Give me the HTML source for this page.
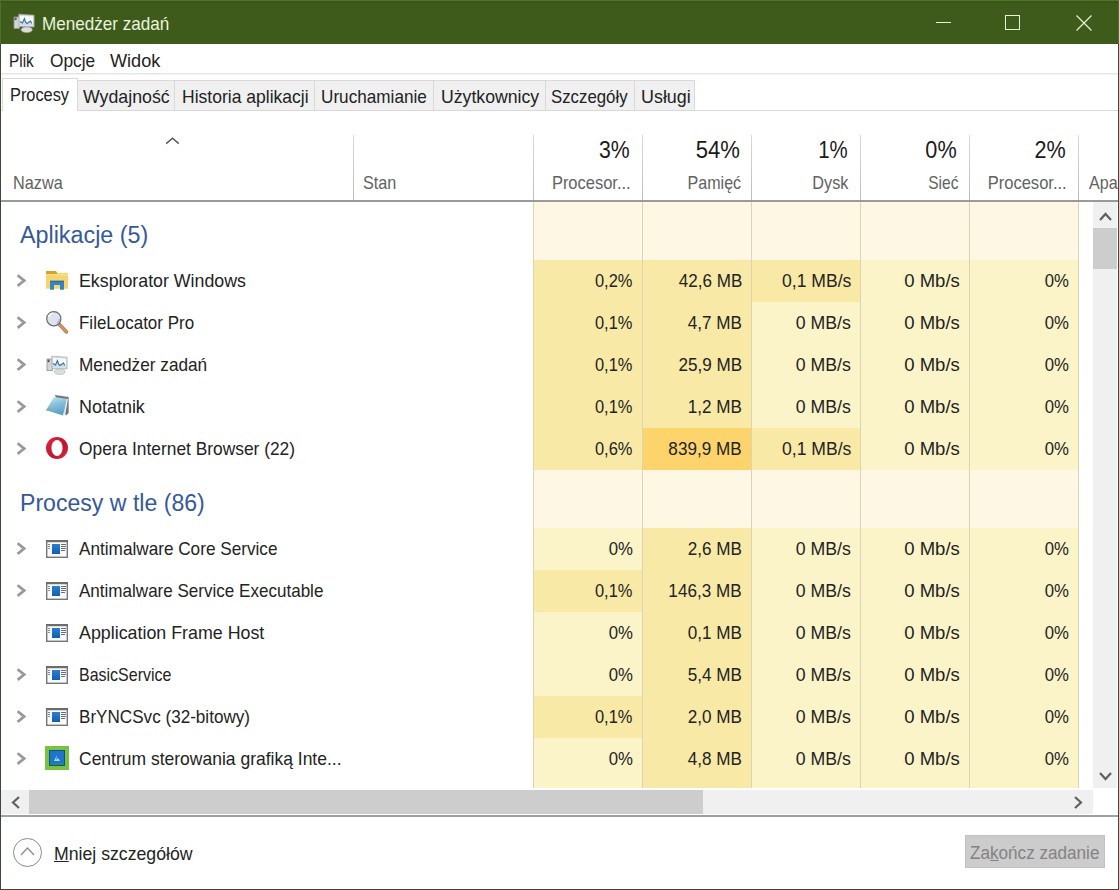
<!DOCTYPE html>
<html><head><meta charset="utf-8"><style>
html,body{margin:0;padding:0;width:1119px;height:890px;overflow:hidden;background:#fff}
body{position:relative;font-family:"Liberation Sans", sans-serif}
.t{position:absolute;white-space:nowrap;font-family:"Liberation Sans", sans-serif}
.r{position:absolute;display:block}
u{text-decoration:underline;text-underline-offset:1px}
</style></head><body>
<div class="r" style="left:0px;top:0px;width:1119px;height:44px;background:#3e5b1c;"></div>
<div class="r" style="left:0px;top:0px;width:1119px;height:1px;background:#536f2f;"></div>
<div class="r" style="left:0px;top:1px;width:1119px;height:2px;background:#385614;"></div>
<svg class="r" style="left:13px;top:12px;" width="23" height="22" viewBox="0 0 23 22">
      <rect x="1" y="5" width="5.5" height="11.5" fill="#d3d5d7" stroke="#8d9193" stroke-width="0.8"/>
      <rect x="1.6" y="5.6" width="2" height="2.6" fill="#5a5a5a"/>
      <path d="M5.8,2.2 L21.1,3.2 L21.1,14.9 L5.8,14.5 Z" fill="#d6d8da" stroke="#a9adb0" stroke-width="0.7"/>
      <path d="M7,3.8 L20,4.6 L20,13.6 L7,13.3 Z" fill="#f6f9fb"/>
      <path d="M7,9.5 L9.5,11 L11.4,6.5 L12.5,10 L14,11.5 L17.5,9 L18.8,11.5 L20,12 L20,13.6 L7,13.3 Z" fill="#c9dcf2"/>
      <polyline points="7,9.5 9.5,11 11.4,6.5 12.5,10 14,11.5 17.5,9 18.8,11.5" fill="none" stroke="#3a6f8c" stroke-width="1.1"/>
      <ellipse cx="13.7" cy="17.8" rx="5.6" ry="2.8" fill="#dcdcdc" stroke="#aeb0b2" stroke-width="0.6"/>
    </svg>
<div class="t" style="left:42.30px;top:13px;font-size:18.6px;line-height:21px;color:#e8f4dc;transform-origin:0 0;transform:scaleX(0.9187);">Menedżer zadań</div>
<div class="r" style="left:936px;top:22px;width:15px;height:1px;background:#e6f3d6;"></div>
<div class="r" style="left:1005px;top:15px;width:13px;height:13px;border:1px solid #e6f3d6"></div>
<svg class="r" style="left:1076px;top:15px;" width="16" height="16" viewBox="0 0 16 16"><path d="M0.5,0.5 L15.5,15.5 M15.5,0.5 L0.5,15.5" stroke="#e6f3d6" stroke-width="1.2"/></svg>
<div class="r" style="left:0px;top:44px;width:1119px;height:846px;background:#ffffff;"></div>
<div class="t" style="left:9.20px;top:51px;font-size:18.17px;line-height:20px;color:#232323;transform-origin:0 0;transform:scaleX(0.8467);">Plik</div>
<div class="t" style="left:49.90px;top:51px;font-size:18.17px;line-height:20px;color:#232323;transform-origin:0 0;transform:scaleX(0.9511);">Opcje</div>
<div class="t" style="left:109.90px;top:51px;font-size:18.17px;line-height:20px;color:#232323;transform-origin:0 0;">Widok</div>
<div class="r" style="left:1px;top:73px;width:1117px;height:1px;background:#e6e6e6;"></div>
<div class="r" style="left:1px;top:74px;width:1117px;height:1px;background:#f2f2f2;"></div>
<div class="r" style="left:1px;top:110px;width:1117px;height:1px;background:#d9d9d9;"></div>
<div class="r" style="left:77px;top:80px;width:98px;height:31px;background:#f0f0f0;border:1px solid #d9d9d9;box-sizing:border-box"></div>
<div class="t" style="left:82.60px;top:87px;font-size:18.17px;line-height:20px;color:#232323;transform-origin:0 0;transform:scaleX(0.9775);">Wydajność</div>
<div class="r" style="left:174px;top:80px;width:141px;height:31px;background:#f0f0f0;border:1px solid #d9d9d9;box-sizing:border-box"></div>
<div class="t" style="left:182.20px;top:87px;font-size:18.17px;line-height:20px;color:#232323;transform-origin:0 0;transform:scaleX(0.9649);">Historia aplikacji</div>
<div class="r" style="left:314px;top:80px;width:120px;height:31px;background:#f0f0f0;border:1px solid #d9d9d9;box-sizing:border-box"></div>
<div class="t" style="left:321.40px;top:87px;font-size:18.17px;line-height:20px;color:#232323;transform-origin:0 0;transform:scaleX(0.9446);">Uruchamianie</div>
<div class="r" style="left:433px;top:80px;width:113px;height:31px;background:#f0f0f0;border:1px solid #d9d9d9;box-sizing:border-box"></div>
<div class="t" style="left:440.50px;top:87px;font-size:18.17px;line-height:20px;color:#232323;transform-origin:0 0;transform:scaleX(0.9733);">Użytkownicy</div>
<div class="r" style="left:545px;top:80px;width:90px;height:31px;background:#f0f0f0;border:1px solid #d9d9d9;box-sizing:border-box"></div>
<div class="t" style="left:551.30px;top:87px;font-size:18.17px;line-height:20px;color:#232323;transform-origin:0 0;transform:scaleX(0.9253);">Szczegóły</div>
<div class="r" style="left:634px;top:80px;width:61px;height:31px;background:#f0f0f0;border:1px solid #d9d9d9;box-sizing:border-box"></div>
<div class="t" style="left:640.70px;top:87px;font-size:18.17px;line-height:20px;color:#232323;transform-origin:0 0;transform:scaleX(0.9860);">Usługi</div>
<div class="r" style="left:2px;top:78px;width:76px;height:33px;background:#fff;border:1px solid #d9d9d9;border-bottom:none;box-sizing:border-box"></div>
<div class="t" style="left:10.00px;top:85px;font-size:17.59px;line-height:20px;color:#232323;transform-origin:0 0;transform:scaleX(0.9297);">Procesy</div>
<div class="r" style="left:353px;top:135px;width:1px;height:65px;background:linear-gradient(#dadada,#bcbcbc);"></div>
<div class="r" style="left:533px;top:135px;width:1px;height:65px;background:linear-gradient(#dadada,#bcbcbc);"></div>
<div class="r" style="left:642px;top:135px;width:1px;height:65px;background:linear-gradient(#dadada,#bcbcbc);"></div>
<div class="r" style="left:751px;top:135px;width:1px;height:65px;background:linear-gradient(#dadada,#bcbcbc);"></div>
<div class="r" style="left:860px;top:135px;width:1px;height:65px;background:linear-gradient(#dadada,#bcbcbc);"></div>
<div class="r" style="left:969px;top:135px;width:1px;height:65px;background:linear-gradient(#dadada,#bcbcbc);"></div>
<div class="r" style="left:1078px;top:135px;width:1px;height:65px;background:linear-gradient(#dadada,#bcbcbc);"></div>
<div class="r" style="left:1px;top:200px;width:1117px;height:2px;background:#9a9a9a;"></div>
<svg class="r" style="left:165px;top:136px;" width="15" height="9" viewBox="0 0 15 9"><polyline points="1.2,7.6 7.5,2.2 13.8,7.6" fill="none" stroke="#555" stroke-width="1.4"/></svg>
<div class="t" style="left:12.90px;top:173px;font-size:17.73px;line-height:20px;color:#616363;transform-origin:0 0;transform:scaleX(0.9182);">Nazwa</div>
<div class="t" style="left:363.40px;top:173px;font-size:17.73px;line-height:20px;color:#616363;transform-origin:0 0;transform:scaleX(0.9139);">Stan</div>
<div class="t" style="right:488.92px;top:136px;font-size:23.98px;line-height:27px;color:#1a1a1a;text-align:right;transform-origin:100% 0;transform:scaleX(0.8857);">3%</div>
<div class="t" style="right:488.28px;top:173px;font-size:17.73px;line-height:20px;color:#616363;text-align:right;transform-origin:100% 0;transform:scaleX(0.9306);">Procesor...</div>
<div class="t" style="right:379.33px;top:136px;font-size:23.98px;line-height:27px;color:#1a1a1a;text-align:right;transform-origin:100% 0;transform:scaleX(0.9208);">54%</div>
<div class="t" style="right:377.82px;top:173px;font-size:17.73px;line-height:20px;color:#616363;text-align:right;transform-origin:100% 0;transform:scaleX(0.9051);">Pamięć</div>
<div class="t" style="right:271.11px;top:136px;font-size:23.98px;line-height:27px;color:#1a1a1a;text-align:right;transform-origin:100% 0;transform:scaleX(0.8514);">1%</div>
<div class="t" style="right:270.79px;top:173px;font-size:17.73px;line-height:20px;color:#616363;text-align:right;transform-origin:100% 0;transform:scaleX(0.9146);">Dysk</div>
<div class="t" style="right:162.32px;top:136px;font-size:23.98px;line-height:27px;color:#1a1a1a;text-align:right;transform-origin:100% 0;transform:scaleX(0.9029);">0%</div>
<div class="t" style="right:160.37px;top:173px;font-size:17.73px;line-height:20px;color:#616363;text-align:right;transform-origin:100% 0;transform:scaleX(0.8771);">Sieć</div>
<div class="t" style="right:53.12px;top:136px;font-size:23.98px;line-height:27px;color:#1a1a1a;text-align:right;transform-origin:100% 0;transform:scaleX(0.9000);">2%</div>
<div class="t" style="right:52.08px;top:173px;font-size:17.73px;line-height:20px;color:#616363;text-align:right;transform-origin:100% 0;transform:scaleX(0.9329);">Procesor...</div>
<div class="t" style="left:1088.50px;top:173px;font-size:17.73px;line-height:20px;color:#616363;transform-origin:0 0;transform:scaleX(0.9091);">Apa</div>
<div class="r" style="left:533px;top:202px;width:109px;height:58px;background:#fef7e3;"></div>
<div class="r" style="left:642px;top:202px;width:109px;height:58px;background:#fef7e3;"></div>
<div class="r" style="left:751px;top:202px;width:109px;height:58px;background:#fef7e3;"></div>
<div class="r" style="left:860px;top:202px;width:109px;height:58px;background:#fef7e3;"></div>
<div class="r" style="left:969px;top:202px;width:109px;height:58px;background:#fef7e3;"></div>
<div class="r" style="left:533px;top:202px;width:1px;height:58px;background:#dbd5b5;"></div>
<div class="r" style="left:642px;top:202px;width:1px;height:58px;background:#dbd5b5;"></div>
<div class="r" style="left:751px;top:202px;width:1px;height:58px;background:#dbd5b5;"></div>
<div class="r" style="left:860px;top:202px;width:1px;height:58px;background:#dbd5b5;"></div>
<div class="r" style="left:969px;top:202px;width:1px;height:58px;background:#dbd5b5;"></div>
<div class="r" style="left:1078px;top:202px;width:1px;height:58px;background:#dbd5b5;"></div>
<div class="t" style="left:20.00px;top:221px;font-size:24.42px;line-height:27px;color:#36599a;transform-origin:0 0;transform:scaleX(0.9552);">Aplikacje (5)</div>
<div class="r" style="left:533px;top:260px;width:109px;height:42px;background:#f8e9a6;"></div>
<div class="r" style="left:642px;top:260px;width:109px;height:42px;background:#f8e9a6;"></div>
<div class="r" style="left:751px;top:260px;width:109px;height:42px;background:#f8e9a6;"></div>
<div class="r" style="left:860px;top:260px;width:109px;height:42px;background:#fcf4c9;"></div>
<div class="r" style="left:969px;top:260px;width:109px;height:42px;background:#fcf4c9;"></div>
<div class="r" style="left:533px;top:260px;width:1px;height:42px;background:#dbd5b5;"></div>
<div class="r" style="left:642px;top:260px;width:1px;height:42px;background:#dbd5b5;"></div>
<div class="r" style="left:751px;top:260px;width:1px;height:42px;background:#dbd5b5;"></div>
<div class="r" style="left:860px;top:260px;width:1px;height:42px;background:#dbd5b5;"></div>
<div class="r" style="left:969px;top:260px;width:1px;height:42px;background:#dbd5b5;"></div>
<div class="r" style="left:1078px;top:260px;width:1px;height:42px;background:#dbd5b5;"></div>
<svg class="r" style="left:16px;top:274px;" width="11" height="14" viewBox="0 0 11 14"><polyline points="1.6,1.3 8.2,6.6 1.6,11.9" fill="none" stroke="#999999" stroke-width="2.7"/></svg>
<svg class="r" style="left:46px;top:270px;" width="23" height="21" viewBox="0 0 23 21">
      <path d="M0,1 L10,1 L11.5,3 L22,3 L22,18.7 L0,18.7 Z" fill="#f7d56c"/>
      <path d="M0,1 L10,1 L11.5,4.2 L0,4.2 Z" fill="#d8a12c"/>
      <path d="M0,4.2 L22,4.2 L22,5.2 L0,5.2 Z" fill="#fae19a"/>
      <path d="M4,10.8 L18,10.8 L18,19.8 L14,19.8 L14,15 L8,15 L8,19.8 L4,19.8 Z" fill="#3485c4"/>
      <path d="M4,10.8 L18,10.8 L18,12 L4,12 Z" fill="#2a6ea8"/>
    </svg>
<div class="t" style="left:79.00px;top:270px;font-size:18.6px;line-height:21px;color:#232323;transform-origin:0 0;transform:scaleX(0.9560);">Eksplorator Windows</div>
<div class="t" style="right:487.04px;top:270px;font-size:18.6px;line-height:21px;color:#232323;text-align:right;transform-origin:100% 0;transform:scaleX(0.8837);">0,2%</div>
<div class="t" style="right:377.26px;top:270px;font-size:18.6px;line-height:21px;color:#232323;text-align:right;transform-origin:100% 0;transform:scaleX(0.9159);">42,6 MB</div>
<div class="t" style="right:268.13px;top:270px;font-size:18.6px;line-height:21px;color:#232323;text-align:right;transform-origin:100% 0;transform:scaleX(0.9452);">0,1 MB/s</div>
<div class="t" style="right:159.69px;top:270px;font-size:18.6px;line-height:21px;color:#232323;text-align:right;transform-origin:100% 0;transform:scaleX(0.9964);">0 Mb/s</div>
<div class="t" style="right:50.61px;top:270px;font-size:18.6px;line-height:21px;color:#232323;text-align:right;transform-origin:100% 0;transform:scaleX(0.9000);">0%</div>
<div class="r" style="left:533px;top:302px;width:109px;height:42px;background:#f8e9a6;"></div>
<div class="r" style="left:642px;top:302px;width:109px;height:42px;background:#f8e9a6;"></div>
<div class="r" style="left:751px;top:302px;width:109px;height:42px;background:#fcf4c9;"></div>
<div class="r" style="left:860px;top:302px;width:109px;height:42px;background:#fcf4c9;"></div>
<div class="r" style="left:969px;top:302px;width:109px;height:42px;background:#fcf4c9;"></div>
<div class="r" style="left:533px;top:302px;width:1px;height:42px;background:#dbd5b5;"></div>
<div class="r" style="left:642px;top:302px;width:1px;height:42px;background:#dbd5b5;"></div>
<div class="r" style="left:751px;top:302px;width:1px;height:42px;background:#dbd5b5;"></div>
<div class="r" style="left:860px;top:302px;width:1px;height:42px;background:#dbd5b5;"></div>
<div class="r" style="left:969px;top:302px;width:1px;height:42px;background:#dbd5b5;"></div>
<div class="r" style="left:1078px;top:302px;width:1px;height:42px;background:#dbd5b5;"></div>
<svg class="r" style="left:16px;top:316px;" width="11" height="14" viewBox="0 0 11 14"><polyline points="1.6,1.3 8.2,6.6 1.6,11.9" fill="none" stroke="#999999" stroke-width="2.7"/></svg>
<svg class="r" style="left:46px;top:311px;" width="23" height="24" viewBox="0 0 23 24">
      <line x1="13.5" y1="13.5" x2="20.5" y2="21" stroke="#b57a48" stroke-width="3.4" stroke-linecap="round"/>
      <line x1="13.5" y1="13.5" x2="20.5" y2="21" stroke="#d9a070" stroke-width="1.2" stroke-linecap="round"/>
      <circle cx="7.8" cy="7.7" r="7.1" fill="#dfe3ee" stroke="#6b6c70" stroke-width="1.2"/>
      <path d="M11,12 A5.5,5.5 0 0 0 13.5,8" fill="none" stroke="#c9a8e8" stroke-width="1.5"/>
      <path d="M2.5,6 A5.5,5.5 0 0 1 7,2.2" fill="none" stroke="#ffffff" stroke-width="1.2"/>
    </svg>
<div class="t" style="left:79.00px;top:312px;font-size:18.6px;line-height:21px;color:#232323;transform-origin:0 0;transform:scaleX(0.9127);">FileLocator Pro</div>
<div class="t" style="right:487.04px;top:312px;font-size:18.6px;line-height:21px;color:#232323;text-align:right;transform-origin:100% 0;transform:scaleX(0.8837);">0,1%</div>
<div class="t" style="right:377.57px;top:312px;font-size:18.6px;line-height:21px;color:#232323;text-align:right;transform-origin:100% 0;transform:scaleX(0.9200);">4,7 MB</div>
<div class="t" style="right:268.62px;top:312px;font-size:18.6px;line-height:21px;color:#232323;text-align:right;transform-origin:100% 0;transform:scaleX(0.9517);">0 MB/s</div>
<div class="t" style="right:159.69px;top:312px;font-size:18.6px;line-height:21px;color:#232323;text-align:right;transform-origin:100% 0;transform:scaleX(0.9964);">0 Mb/s</div>
<div class="t" style="right:50.61px;top:312px;font-size:18.6px;line-height:21px;color:#232323;text-align:right;transform-origin:100% 0;transform:scaleX(0.9000);">0%</div>
<div class="r" style="left:533px;top:344px;width:109px;height:42px;background:#f8e9a6;"></div>
<div class="r" style="left:642px;top:344px;width:109px;height:42px;background:#f8e9a6;"></div>
<div class="r" style="left:751px;top:344px;width:109px;height:42px;background:#fcf4c9;"></div>
<div class="r" style="left:860px;top:344px;width:109px;height:42px;background:#fcf4c9;"></div>
<div class="r" style="left:969px;top:344px;width:109px;height:42px;background:#fcf4c9;"></div>
<div class="r" style="left:533px;top:344px;width:1px;height:42px;background:#dbd5b5;"></div>
<div class="r" style="left:642px;top:344px;width:1px;height:42px;background:#dbd5b5;"></div>
<div class="r" style="left:751px;top:344px;width:1px;height:42px;background:#dbd5b5;"></div>
<div class="r" style="left:860px;top:344px;width:1px;height:42px;background:#dbd5b5;"></div>
<div class="r" style="left:969px;top:344px;width:1px;height:42px;background:#dbd5b5;"></div>
<div class="r" style="left:1078px;top:344px;width:1px;height:42px;background:#dbd5b5;"></div>
<svg class="r" style="left:16px;top:358px;" width="11" height="14" viewBox="0 0 11 14"><polyline points="1.6,1.3 8.2,6.6 1.6,11.9" fill="none" stroke="#999999" stroke-width="2.7"/></svg>
<svg class="r" style="left:46px;top:354px;" width="23" height="22" viewBox="0 0 23 22">
      <rect x="1" y="5" width="5.5" height="11.5" fill="#d3d5d7" stroke="#8d9193" stroke-width="0.8"/>
      <rect x="1.6" y="5.6" width="2" height="2.6" fill="#5a5a5a"/>
      <path d="M5.8,2.2 L21.1,3.2 L21.1,14.9 L5.8,14.5 Z" fill="#d6d8da" stroke="#a9adb0" stroke-width="0.7"/>
      <path d="M7,3.8 L20,4.6 L20,13.6 L7,13.3 Z" fill="#f6f9fb"/>
      <path d="M7,9.5 L9.5,11 L11.4,6.5 L12.5,10 L14,11.5 L17.5,9 L18.8,11.5 L20,12 L20,13.6 L7,13.3 Z" fill="#c9dcf2"/>
      <polyline points="7,9.5 9.5,11 11.4,6.5 12.5,10 14,11.5 17.5,9 18.8,11.5" fill="none" stroke="#3a6f8c" stroke-width="1.1"/>
      <ellipse cx="13.7" cy="17.8" rx="5.6" ry="2.8" fill="#dcdcdc" stroke="#aeb0b2" stroke-width="0.6"/>
    </svg>
<div class="t" style="left:79.00px;top:354px;font-size:18.6px;line-height:21px;color:#232323;transform-origin:0 0;transform:scaleX(0.9252);">Menedżer zadań</div>
<div class="t" style="right:487.04px;top:354px;font-size:18.6px;line-height:21px;color:#232323;text-align:right;transform-origin:100% 0;transform:scaleX(0.8837);">0,1%</div>
<div class="t" style="right:377.26px;top:354px;font-size:18.6px;line-height:21px;color:#232323;text-align:right;transform-origin:100% 0;transform:scaleX(0.9200);">25,9 MB</div>
<div class="t" style="right:268.62px;top:354px;font-size:18.6px;line-height:21px;color:#232323;text-align:right;transform-origin:100% 0;transform:scaleX(0.9517);">0 MB/s</div>
<div class="t" style="right:159.69px;top:354px;font-size:18.6px;line-height:21px;color:#232323;text-align:right;transform-origin:100% 0;transform:scaleX(0.9964);">0 Mb/s</div>
<div class="t" style="right:50.61px;top:354px;font-size:18.6px;line-height:21px;color:#232323;text-align:right;transform-origin:100% 0;transform:scaleX(0.9000);">0%</div>
<div class="r" style="left:533px;top:386px;width:109px;height:42px;background:#f8e9a6;"></div>
<div class="r" style="left:642px;top:386px;width:109px;height:42px;background:#f8e9a6;"></div>
<div class="r" style="left:751px;top:386px;width:109px;height:42px;background:#fcf4c9;"></div>
<div class="r" style="left:860px;top:386px;width:109px;height:42px;background:#fcf4c9;"></div>
<div class="r" style="left:969px;top:386px;width:109px;height:42px;background:#fcf4c9;"></div>
<div class="r" style="left:533px;top:386px;width:1px;height:42px;background:#dbd5b5;"></div>
<div class="r" style="left:642px;top:386px;width:1px;height:42px;background:#dbd5b5;"></div>
<div class="r" style="left:751px;top:386px;width:1px;height:42px;background:#dbd5b5;"></div>
<div class="r" style="left:860px;top:386px;width:1px;height:42px;background:#dbd5b5;"></div>
<div class="r" style="left:969px;top:386px;width:1px;height:42px;background:#dbd5b5;"></div>
<div class="r" style="left:1078px;top:386px;width:1px;height:42px;background:#dbd5b5;"></div>
<svg class="r" style="left:16px;top:400px;" width="11" height="14" viewBox="0 0 11 14"><polyline points="1.6,1.3 8.2,6.6 1.6,11.9" fill="none" stroke="#999999" stroke-width="2.7"/></svg>
<svg class="r" style="left:46px;top:394px;" width="24" height="23" viewBox="0 0 24 23">
      <defs><linearGradient id="npg" x1="0" y1="0" x2="0.3" y2="1"><stop offset="0" stop-color="#cfe8f2"/><stop offset="0.45" stop-color="#8cc2de"/><stop offset="1" stop-color="#5aa2c6"/></linearGradient></defs>
      <path d="M8.8,1 L22.6,3 L22.6,19 L20,21.5 Z" fill="#6f7579"/>
      <path d="M8,3 L20.6,4.8 L17.2,21.6 L0,16.2 Z" fill="url(#npg)"/>
      <path d="M20.6,4.8 L22,5 L19,21.5 L17.2,21.6 Z" fill="#e4f1f4"/>
      <path d="M0,16.2 L4,13 L6,17.5 Z" fill="#7fb2a8"/>
    </svg>
<div class="t" style="left:79.00px;top:396px;font-size:18.6px;line-height:21px;color:#232323;transform-origin:0 0;transform:scaleX(0.9652);">Notatnik</div>
<div class="t" style="right:487.04px;top:396px;font-size:18.6px;line-height:21px;color:#232323;text-align:right;transform-origin:100% 0;transform:scaleX(0.8837);">0,1%</div>
<div class="t" style="right:377.57px;top:396px;font-size:18.6px;line-height:21px;color:#232323;text-align:right;transform-origin:100% 0;transform:scaleX(0.9200);">1,2 MB</div>
<div class="t" style="right:268.62px;top:396px;font-size:18.6px;line-height:21px;color:#232323;text-align:right;transform-origin:100% 0;transform:scaleX(0.9517);">0 MB/s</div>
<div class="t" style="right:159.69px;top:396px;font-size:18.6px;line-height:21px;color:#232323;text-align:right;transform-origin:100% 0;transform:scaleX(0.9964);">0 Mb/s</div>
<div class="t" style="right:50.61px;top:396px;font-size:18.6px;line-height:21px;color:#232323;text-align:right;transform-origin:100% 0;transform:scaleX(0.9000);">0%</div>
<div class="r" style="left:533px;top:428px;width:109px;height:42px;background:#f8e9a6;"></div>
<div class="r" style="left:642px;top:428px;width:109px;height:42px;background:#fdd36b;"></div>
<div class="r" style="left:751px;top:428px;width:109px;height:42px;background:#f8e9a6;"></div>
<div class="r" style="left:860px;top:428px;width:109px;height:42px;background:#fcf4c9;"></div>
<div class="r" style="left:969px;top:428px;width:109px;height:42px;background:#fcf4c9;"></div>
<div class="r" style="left:533px;top:428px;width:1px;height:42px;background:#dbd5b5;"></div>
<div class="r" style="left:642px;top:428px;width:1px;height:42px;background:#dbd5b5;"></div>
<div class="r" style="left:751px;top:428px;width:1px;height:42px;background:#dbd5b5;"></div>
<div class="r" style="left:860px;top:428px;width:1px;height:42px;background:#dbd5b5;"></div>
<div class="r" style="left:969px;top:428px;width:1px;height:42px;background:#dbd5b5;"></div>
<div class="r" style="left:1078px;top:428px;width:1px;height:42px;background:#dbd5b5;"></div>
<svg class="r" style="left:16px;top:442px;" width="11" height="14" viewBox="0 0 11 14"><polyline points="1.6,1.3 8.2,6.6 1.6,11.9" fill="none" stroke="#999999" stroke-width="2.7"/></svg>
<svg class="r" style="left:46px;top:437px;" width="23" height="23" viewBox="0 0 23 23">
      <defs><linearGradient id="og" x1="0" y1="0" x2="1" y2="1"><stop offset="0" stop-color="#e4253f"/><stop offset="0.6" stop-color="#c0142e"/><stop offset="1" stop-color="#e0303a"/></linearGradient></defs>
      <ellipse cx="11" cy="11" rx="11" ry="11" fill="url(#og)"/>
      <ellipse cx="11" cy="11" rx="5.6" ry="8" fill="#ffffff"/>
    </svg>
<div class="t" style="left:79.00px;top:438px;font-size:18.6px;line-height:21px;color:#232323;transform-origin:0 0;transform:scaleX(0.9332);">Opera Internet Browser (22)</div>
<div class="t" style="right:487.04px;top:438px;font-size:18.6px;line-height:21px;color:#232323;text-align:right;transform-origin:100% 0;transform:scaleX(0.8837);">0,6%</div>
<div class="t" style="right:377.86px;top:438px;font-size:18.6px;line-height:21px;color:#232323;text-align:right;transform-origin:100% 0;transform:scaleX(0.9200);">839,9 MB</div>
<div class="t" style="right:268.13px;top:438px;font-size:18.6px;line-height:21px;color:#232323;text-align:right;transform-origin:100% 0;transform:scaleX(0.9452);">0,1 MB/s</div>
<div class="t" style="right:159.69px;top:438px;font-size:18.6px;line-height:21px;color:#232323;text-align:right;transform-origin:100% 0;transform:scaleX(0.9964);">0 Mb/s</div>
<div class="t" style="right:50.61px;top:438px;font-size:18.6px;line-height:21px;color:#232323;text-align:right;transform-origin:100% 0;transform:scaleX(0.9000);">0%</div>
<div class="r" style="left:533px;top:470px;width:109px;height:58px;background:#fef7e3;"></div>
<div class="r" style="left:642px;top:470px;width:109px;height:58px;background:#fef7e3;"></div>
<div class="r" style="left:751px;top:470px;width:109px;height:58px;background:#fef7e3;"></div>
<div class="r" style="left:860px;top:470px;width:109px;height:58px;background:#fef7e3;"></div>
<div class="r" style="left:969px;top:470px;width:109px;height:58px;background:#fef7e3;"></div>
<div class="r" style="left:533px;top:470px;width:1px;height:58px;background:#dbd5b5;"></div>
<div class="r" style="left:642px;top:470px;width:1px;height:58px;background:#dbd5b5;"></div>
<div class="r" style="left:751px;top:470px;width:1px;height:58px;background:#dbd5b5;"></div>
<div class="r" style="left:860px;top:470px;width:1px;height:58px;background:#dbd5b5;"></div>
<div class="r" style="left:969px;top:470px;width:1px;height:58px;background:#dbd5b5;"></div>
<div class="r" style="left:1078px;top:470px;width:1px;height:58px;background:#dbd5b5;"></div>
<div class="t" style="left:20.00px;top:489px;font-size:24.42px;line-height:27px;color:#36599a;transform-origin:0 0;transform:scaleX(0.9462);">Procesy w tle (86)</div>
<div class="r" style="left:533px;top:528px;width:109px;height:42px;background:#fcf4c9;"></div>
<div class="r" style="left:642px;top:528px;width:109px;height:42px;background:#f8e9a6;"></div>
<div class="r" style="left:751px;top:528px;width:109px;height:42px;background:#fcf4c9;"></div>
<div class="r" style="left:860px;top:528px;width:109px;height:42px;background:#fcf4c9;"></div>
<div class="r" style="left:969px;top:528px;width:109px;height:42px;background:#fcf4c9;"></div>
<div class="r" style="left:533px;top:528px;width:1px;height:42px;background:#dbd5b5;"></div>
<div class="r" style="left:642px;top:528px;width:1px;height:42px;background:#dbd5b5;"></div>
<div class="r" style="left:751px;top:528px;width:1px;height:42px;background:#dbd5b5;"></div>
<div class="r" style="left:860px;top:528px;width:1px;height:42px;background:#dbd5b5;"></div>
<div class="r" style="left:969px;top:528px;width:1px;height:42px;background:#dbd5b5;"></div>
<div class="r" style="left:1078px;top:528px;width:1px;height:42px;background:#dbd5b5;"></div>
<svg class="r" style="left:16px;top:542px;" width="11" height="14" viewBox="0 0 11 14"><polyline points="1.6,1.3 8.2,6.6 1.6,11.9" fill="none" stroke="#999999" stroke-width="2.7"/></svg>
<svg class="r" style="left:46px;top:540px;" width="23" height="20" viewBox="0 0 23 20">
      <defs><linearGradient id="svb" x1="0" y1="0" x2="0" y2="1"><stop offset="0" stop-color="#2a7fd0"/><stop offset="1" stop-color="#125fae"/></linearGradient></defs>
      <rect x="0.7" y="0.7" width="20.6" height="16.6" fill="#f8fafb" stroke="#767676" stroke-width="1.4"/>
      <rect x="0" y="0" width="22" height="2.2" fill="#6c6c6c"/>
      <rect x="6" y="4" width="8" height="10" fill="url(#svb)"/>
      <rect x="2" y="4" width="2" height="1" fill="#7a80a8"/>
      <rect x="2" y="6" width="2" height="1" fill="#7a80a8"/>
      <rect x="2" y="8" width="2" height="1" fill="#8a90b0"/>
      <rect x="15" y="4" width="5" height="1" fill="#646a90"/>
      <rect x="15" y="6" width="5" height="1" fill="#646a90"/>
      <rect x="15" y="8" width="5" height="1" fill="#646a90"/>
      <rect x="15" y="10" width="4" height="1" fill="#646a90"/>
    </svg>
<div class="t" style="left:79.00px;top:538px;font-size:18.6px;line-height:21px;color:#232323;transform-origin:0 0;transform:scaleX(0.9233);">Antimalware Core Service</div>
<div class="t" style="right:486.61px;top:538px;font-size:18.6px;line-height:21px;color:#232323;text-align:right;transform-origin:100% 0;transform:scaleX(0.9000);">0%</div>
<div class="t" style="right:377.57px;top:538px;font-size:18.6px;line-height:21px;color:#232323;text-align:right;transform-origin:100% 0;transform:scaleX(0.9200);">2,6 MB</div>
<div class="t" style="right:268.62px;top:538px;font-size:18.6px;line-height:21px;color:#232323;text-align:right;transform-origin:100% 0;transform:scaleX(0.9517);">0 MB/s</div>
<div class="t" style="right:159.69px;top:538px;font-size:18.6px;line-height:21px;color:#232323;text-align:right;transform-origin:100% 0;transform:scaleX(0.9964);">0 Mb/s</div>
<div class="t" style="right:50.61px;top:538px;font-size:18.6px;line-height:21px;color:#232323;text-align:right;transform-origin:100% 0;transform:scaleX(0.9000);">0%</div>
<div class="r" style="left:533px;top:570px;width:109px;height:42px;background:#f8e9a6;"></div>
<div class="r" style="left:642px;top:570px;width:109px;height:42px;background:#f8e9a6;"></div>
<div class="r" style="left:751px;top:570px;width:109px;height:42px;background:#fcf4c9;"></div>
<div class="r" style="left:860px;top:570px;width:109px;height:42px;background:#fcf4c9;"></div>
<div class="r" style="left:969px;top:570px;width:109px;height:42px;background:#fcf4c9;"></div>
<div class="r" style="left:533px;top:570px;width:1px;height:42px;background:#dbd5b5;"></div>
<div class="r" style="left:642px;top:570px;width:1px;height:42px;background:#dbd5b5;"></div>
<div class="r" style="left:751px;top:570px;width:1px;height:42px;background:#dbd5b5;"></div>
<div class="r" style="left:860px;top:570px;width:1px;height:42px;background:#dbd5b5;"></div>
<div class="r" style="left:969px;top:570px;width:1px;height:42px;background:#dbd5b5;"></div>
<div class="r" style="left:1078px;top:570px;width:1px;height:42px;background:#dbd5b5;"></div>
<svg class="r" style="left:16px;top:584px;" width="11" height="14" viewBox="0 0 11 14"><polyline points="1.6,1.3 8.2,6.6 1.6,11.9" fill="none" stroke="#999999" stroke-width="2.7"/></svg>
<svg class="r" style="left:46px;top:582px;" width="23" height="20" viewBox="0 0 23 20">
      <defs><linearGradient id="svb" x1="0" y1="0" x2="0" y2="1"><stop offset="0" stop-color="#2a7fd0"/><stop offset="1" stop-color="#125fae"/></linearGradient></defs>
      <rect x="0.7" y="0.7" width="20.6" height="16.6" fill="#f8fafb" stroke="#767676" stroke-width="1.4"/>
      <rect x="0" y="0" width="22" height="2.2" fill="#6c6c6c"/>
      <rect x="6" y="4" width="8" height="10" fill="url(#svb)"/>
      <rect x="2" y="4" width="2" height="1" fill="#7a80a8"/>
      <rect x="2" y="6" width="2" height="1" fill="#7a80a8"/>
      <rect x="2" y="8" width="2" height="1" fill="#8a90b0"/>
      <rect x="15" y="4" width="5" height="1" fill="#646a90"/>
      <rect x="15" y="6" width="5" height="1" fill="#646a90"/>
      <rect x="15" y="8" width="5" height="1" fill="#646a90"/>
      <rect x="15" y="10" width="4" height="1" fill="#646a90"/>
    </svg>
<div class="t" style="left:79.00px;top:580px;font-size:18.6px;line-height:21px;color:#232323;transform-origin:0 0;transform:scaleX(0.9165);">Antimalware Service Executable</div>
<div class="t" style="right:487.04px;top:580px;font-size:18.6px;line-height:21px;color:#232323;text-align:right;transform-origin:100% 0;transform:scaleX(0.8837);">0,1%</div>
<div class="t" style="right:377.86px;top:580px;font-size:18.6px;line-height:21px;color:#232323;text-align:right;transform-origin:100% 0;transform:scaleX(0.9200);">146,3 MB</div>
<div class="t" style="right:268.62px;top:580px;font-size:18.6px;line-height:21px;color:#232323;text-align:right;transform-origin:100% 0;transform:scaleX(0.9517);">0 MB/s</div>
<div class="t" style="right:159.69px;top:580px;font-size:18.6px;line-height:21px;color:#232323;text-align:right;transform-origin:100% 0;transform:scaleX(0.9964);">0 Mb/s</div>
<div class="t" style="right:50.61px;top:580px;font-size:18.6px;line-height:21px;color:#232323;text-align:right;transform-origin:100% 0;transform:scaleX(0.9000);">0%</div>
<div class="r" style="left:533px;top:612px;width:109px;height:42px;background:#fcf4c9;"></div>
<div class="r" style="left:642px;top:612px;width:109px;height:42px;background:#f8e9a6;"></div>
<div class="r" style="left:751px;top:612px;width:109px;height:42px;background:#fcf4c9;"></div>
<div class="r" style="left:860px;top:612px;width:109px;height:42px;background:#fcf4c9;"></div>
<div class="r" style="left:969px;top:612px;width:109px;height:42px;background:#fcf4c9;"></div>
<div class="r" style="left:533px;top:612px;width:1px;height:42px;background:#dbd5b5;"></div>
<div class="r" style="left:642px;top:612px;width:1px;height:42px;background:#dbd5b5;"></div>
<div class="r" style="left:751px;top:612px;width:1px;height:42px;background:#dbd5b5;"></div>
<div class="r" style="left:860px;top:612px;width:1px;height:42px;background:#dbd5b5;"></div>
<div class="r" style="left:969px;top:612px;width:1px;height:42px;background:#dbd5b5;"></div>
<div class="r" style="left:1078px;top:612px;width:1px;height:42px;background:#dbd5b5;"></div>
<svg class="r" style="left:46px;top:624px;" width="23" height="20" viewBox="0 0 23 20">
      <defs><linearGradient id="svb" x1="0" y1="0" x2="0" y2="1"><stop offset="0" stop-color="#2a7fd0"/><stop offset="1" stop-color="#125fae"/></linearGradient></defs>
      <rect x="0.7" y="0.7" width="20.6" height="16.6" fill="#f8fafb" stroke="#767676" stroke-width="1.4"/>
      <rect x="0" y="0" width="22" height="2.2" fill="#6c6c6c"/>
      <rect x="6" y="4" width="8" height="10" fill="url(#svb)"/>
      <rect x="2" y="4" width="2" height="1" fill="#7a80a8"/>
      <rect x="2" y="6" width="2" height="1" fill="#7a80a8"/>
      <rect x="2" y="8" width="2" height="1" fill="#8a90b0"/>
      <rect x="15" y="4" width="5" height="1" fill="#646a90"/>
      <rect x="15" y="6" width="5" height="1" fill="#646a90"/>
      <rect x="15" y="8" width="5" height="1" fill="#646a90"/>
      <rect x="15" y="10" width="4" height="1" fill="#646a90"/>
    </svg>
<div class="t" style="left:79.00px;top:622px;font-size:18.6px;line-height:21px;color:#232323;transform-origin:0 0;transform:scaleX(0.9588);">Application Frame Host</div>
<div class="t" style="right:486.61px;top:622px;font-size:18.6px;line-height:21px;color:#232323;text-align:right;transform-origin:100% 0;transform:scaleX(0.9000);">0%</div>
<div class="t" style="right:377.57px;top:622px;font-size:18.6px;line-height:21px;color:#232323;text-align:right;transform-origin:100% 0;transform:scaleX(0.9200);">0,1 MB</div>
<div class="t" style="right:268.62px;top:622px;font-size:18.6px;line-height:21px;color:#232323;text-align:right;transform-origin:100% 0;transform:scaleX(0.9517);">0 MB/s</div>
<div class="t" style="right:159.69px;top:622px;font-size:18.6px;line-height:21px;color:#232323;text-align:right;transform-origin:100% 0;transform:scaleX(0.9964);">0 Mb/s</div>
<div class="t" style="right:50.61px;top:622px;font-size:18.6px;line-height:21px;color:#232323;text-align:right;transform-origin:100% 0;transform:scaleX(0.9000);">0%</div>
<div class="r" style="left:533px;top:654px;width:109px;height:42px;background:#fcf4c9;"></div>
<div class="r" style="left:642px;top:654px;width:109px;height:42px;background:#f8e9a6;"></div>
<div class="r" style="left:751px;top:654px;width:109px;height:42px;background:#fcf4c9;"></div>
<div class="r" style="left:860px;top:654px;width:109px;height:42px;background:#fcf4c9;"></div>
<div class="r" style="left:969px;top:654px;width:109px;height:42px;background:#fcf4c9;"></div>
<div class="r" style="left:533px;top:654px;width:1px;height:42px;background:#dbd5b5;"></div>
<div class="r" style="left:642px;top:654px;width:1px;height:42px;background:#dbd5b5;"></div>
<div class="r" style="left:751px;top:654px;width:1px;height:42px;background:#dbd5b5;"></div>
<div class="r" style="left:860px;top:654px;width:1px;height:42px;background:#dbd5b5;"></div>
<div class="r" style="left:969px;top:654px;width:1px;height:42px;background:#dbd5b5;"></div>
<div class="r" style="left:1078px;top:654px;width:1px;height:42px;background:#dbd5b5;"></div>
<svg class="r" style="left:16px;top:668px;" width="11" height="14" viewBox="0 0 11 14"><polyline points="1.6,1.3 8.2,6.6 1.6,11.9" fill="none" stroke="#999999" stroke-width="2.7"/></svg>
<svg class="r" style="left:46px;top:666px;" width="23" height="20" viewBox="0 0 23 20">
      <defs><linearGradient id="svb" x1="0" y1="0" x2="0" y2="1"><stop offset="0" stop-color="#2a7fd0"/><stop offset="1" stop-color="#125fae"/></linearGradient></defs>
      <rect x="0.7" y="0.7" width="20.6" height="16.6" fill="#f8fafb" stroke="#767676" stroke-width="1.4"/>
      <rect x="0" y="0" width="22" height="2.2" fill="#6c6c6c"/>
      <rect x="6" y="4" width="8" height="10" fill="url(#svb)"/>
      <rect x="2" y="4" width="2" height="1" fill="#7a80a8"/>
      <rect x="2" y="6" width="2" height="1" fill="#7a80a8"/>
      <rect x="2" y="8" width="2" height="1" fill="#8a90b0"/>
      <rect x="15" y="4" width="5" height="1" fill="#646a90"/>
      <rect x="15" y="6" width="5" height="1" fill="#646a90"/>
      <rect x="15" y="8" width="5" height="1" fill="#646a90"/>
      <rect x="15" y="10" width="4" height="1" fill="#646a90"/>
    </svg>
<div class="t" style="left:79.00px;top:664px;font-size:18.6px;line-height:21px;color:#232323;transform-origin:0 0;transform:scaleX(0.8598);">BasicService</div>
<div class="t" style="right:486.61px;top:664px;font-size:18.6px;line-height:21px;color:#232323;text-align:right;transform-origin:100% 0;transform:scaleX(0.9000);">0%</div>
<div class="t" style="right:377.57px;top:664px;font-size:18.6px;line-height:21px;color:#232323;text-align:right;transform-origin:100% 0;transform:scaleX(0.9200);">5,4 MB</div>
<div class="t" style="right:268.62px;top:664px;font-size:18.6px;line-height:21px;color:#232323;text-align:right;transform-origin:100% 0;transform:scaleX(0.9517);">0 MB/s</div>
<div class="t" style="right:159.69px;top:664px;font-size:18.6px;line-height:21px;color:#232323;text-align:right;transform-origin:100% 0;transform:scaleX(0.9964);">0 Mb/s</div>
<div class="t" style="right:50.61px;top:664px;font-size:18.6px;line-height:21px;color:#232323;text-align:right;transform-origin:100% 0;transform:scaleX(0.9000);">0%</div>
<div class="r" style="left:533px;top:696px;width:109px;height:42px;background:#f8e9a6;"></div>
<div class="r" style="left:642px;top:696px;width:109px;height:42px;background:#f8e9a6;"></div>
<div class="r" style="left:751px;top:696px;width:109px;height:42px;background:#fcf4c9;"></div>
<div class="r" style="left:860px;top:696px;width:109px;height:42px;background:#fcf4c9;"></div>
<div class="r" style="left:969px;top:696px;width:109px;height:42px;background:#fcf4c9;"></div>
<div class="r" style="left:533px;top:696px;width:1px;height:42px;background:#dbd5b5;"></div>
<div class="r" style="left:642px;top:696px;width:1px;height:42px;background:#dbd5b5;"></div>
<div class="r" style="left:751px;top:696px;width:1px;height:42px;background:#dbd5b5;"></div>
<div class="r" style="left:860px;top:696px;width:1px;height:42px;background:#dbd5b5;"></div>
<div class="r" style="left:969px;top:696px;width:1px;height:42px;background:#dbd5b5;"></div>
<div class="r" style="left:1078px;top:696px;width:1px;height:42px;background:#dbd5b5;"></div>
<svg class="r" style="left:16px;top:710px;" width="11" height="14" viewBox="0 0 11 14"><polyline points="1.6,1.3 8.2,6.6 1.6,11.9" fill="none" stroke="#999999" stroke-width="2.7"/></svg>
<svg class="r" style="left:46px;top:708px;" width="23" height="20" viewBox="0 0 23 20">
      <defs><linearGradient id="svb" x1="0" y1="0" x2="0" y2="1"><stop offset="0" stop-color="#2a7fd0"/><stop offset="1" stop-color="#125fae"/></linearGradient></defs>
      <rect x="0.7" y="0.7" width="20.6" height="16.6" fill="#f8fafb" stroke="#767676" stroke-width="1.4"/>
      <rect x="0" y="0" width="22" height="2.2" fill="#6c6c6c"/>
      <rect x="6" y="4" width="8" height="10" fill="url(#svb)"/>
      <rect x="2" y="4" width="2" height="1" fill="#7a80a8"/>
      <rect x="2" y="6" width="2" height="1" fill="#7a80a8"/>
      <rect x="2" y="8" width="2" height="1" fill="#8a90b0"/>
      <rect x="15" y="4" width="5" height="1" fill="#646a90"/>
      <rect x="15" y="6" width="5" height="1" fill="#646a90"/>
      <rect x="15" y="8" width="5" height="1" fill="#646a90"/>
      <rect x="15" y="10" width="4" height="1" fill="#646a90"/>
    </svg>
<div class="t" style="left:79.00px;top:706px;font-size:18.6px;line-height:21px;color:#232323;transform-origin:0 0;transform:scaleX(0.9194);">BrYNCSvc (32-bitowy)</div>
<div class="t" style="right:487.04px;top:706px;font-size:18.6px;line-height:21px;color:#232323;text-align:right;transform-origin:100% 0;transform:scaleX(0.8837);">0,1%</div>
<div class="t" style="right:377.57px;top:706px;font-size:18.6px;line-height:21px;color:#232323;text-align:right;transform-origin:100% 0;transform:scaleX(0.9200);">2,0 MB</div>
<div class="t" style="right:268.62px;top:706px;font-size:18.6px;line-height:21px;color:#232323;text-align:right;transform-origin:100% 0;transform:scaleX(0.9517);">0 MB/s</div>
<div class="t" style="right:159.69px;top:706px;font-size:18.6px;line-height:21px;color:#232323;text-align:right;transform-origin:100% 0;transform:scaleX(0.9964);">0 Mb/s</div>
<div class="t" style="right:50.61px;top:706px;font-size:18.6px;line-height:21px;color:#232323;text-align:right;transform-origin:100% 0;transform:scaleX(0.9000);">0%</div>
<div class="r" style="left:533px;top:738px;width:109px;height:42px;background:#fcf4c9;"></div>
<div class="r" style="left:642px;top:738px;width:109px;height:42px;background:#f8e9a6;"></div>
<div class="r" style="left:751px;top:738px;width:109px;height:42px;background:#fcf4c9;"></div>
<div class="r" style="left:860px;top:738px;width:109px;height:42px;background:#fcf4c9;"></div>
<div class="r" style="left:969px;top:738px;width:109px;height:42px;background:#fcf4c9;"></div>
<div class="r" style="left:533px;top:738px;width:1px;height:42px;background:#dbd5b5;"></div>
<div class="r" style="left:642px;top:738px;width:1px;height:42px;background:#dbd5b5;"></div>
<div class="r" style="left:751px;top:738px;width:1px;height:42px;background:#dbd5b5;"></div>
<div class="r" style="left:860px;top:738px;width:1px;height:42px;background:#dbd5b5;"></div>
<div class="r" style="left:969px;top:738px;width:1px;height:42px;background:#dbd5b5;"></div>
<div class="r" style="left:1078px;top:738px;width:1px;height:42px;background:#dbd5b5;"></div>
<svg class="r" style="left:16px;top:752px;" width="11" height="14" viewBox="0 0 11 14"><polyline points="1.6,1.3 8.2,6.6 1.6,11.9" fill="none" stroke="#999999" stroke-width="2.7"/></svg>
<svg class="r" style="left:45px;top:746px;" width="25" height="25" viewBox="0 0 25 25">
      <rect x="0" y="0" width="24" height="24" fill="#7ac143"/>
      <rect x="4.5" y="4.5" width="15" height="15" fill="#1f74cc" stroke="#0c5585" stroke-width="1"/>
      <rect x="5" y="17.5" width="14" height="1.5" fill="#2f8a6a"/>
      <path d="M9,15 L15,15 L13,12 L11,14 L12,9 Z" fill="#9fe0ff"/>
    </svg>
<div class="t" style="left:79.00px;top:748px;font-size:18.6px;line-height:21px;color:#232323;transform-origin:0 0;transform:scaleX(0.9409);">Centrum sterowania grafiką Inte...</div>
<div class="t" style="right:486.61px;top:748px;font-size:18.6px;line-height:21px;color:#232323;text-align:right;transform-origin:100% 0;transform:scaleX(0.9000);">0%</div>
<div class="t" style="right:377.57px;top:748px;font-size:18.6px;line-height:21px;color:#232323;text-align:right;transform-origin:100% 0;transform:scaleX(0.9200);">4,8 MB</div>
<div class="t" style="right:268.62px;top:748px;font-size:18.6px;line-height:21px;color:#232323;text-align:right;transform-origin:100% 0;transform:scaleX(0.9517);">0 MB/s</div>
<div class="t" style="right:159.69px;top:748px;font-size:18.6px;line-height:21px;color:#232323;text-align:right;transform-origin:100% 0;transform:scaleX(0.9964);">0 Mb/s</div>
<div class="t" style="right:50.61px;top:748px;font-size:18.6px;line-height:21px;color:#232323;text-align:right;transform-origin:100% 0;transform:scaleX(0.9000);">0%</div>
<div class="r" style="left:533px;top:780px;width:109px;height:42px;background:#fcf4c9;"></div>
<div class="r" style="left:642px;top:780px;width:109px;height:42px;background:#f8e9a6;"></div>
<div class="r" style="left:751px;top:780px;width:109px;height:42px;background:#fcf4c9;"></div>
<div class="r" style="left:860px;top:780px;width:109px;height:42px;background:#fcf4c9;"></div>
<div class="r" style="left:969px;top:780px;width:109px;height:42px;background:#fcf4c9;"></div>
<div class="r" style="left:533px;top:780px;width:1px;height:42px;background:#dbd5b5;"></div>
<div class="r" style="left:642px;top:780px;width:1px;height:42px;background:#dbd5b5;"></div>
<div class="r" style="left:751px;top:780px;width:1px;height:42px;background:#dbd5b5;"></div>
<div class="r" style="left:860px;top:780px;width:1px;height:42px;background:#dbd5b5;"></div>
<div class="r" style="left:969px;top:780px;width:1px;height:42px;background:#dbd5b5;"></div>
<div class="r" style="left:1078px;top:780px;width:1px;height:42px;background:#dbd5b5;"></div>
<div class="r" style="left:0px;top:788px;width:1119px;height:102px;background:#ffffff;"></div>
<div class="r" style="left:1093px;top:202px;width:24px;height:586px;background:#f0f0f0;"></div>
<div class="r" style="left:1093px;top:228px;width:24px;height:41px;background:#cdcdcd;"></div>
<svg class="r" style="left:1099px;top:212px;" width="13" height="9" viewBox="0 0 13 9"><polyline points="1,8 6.5,2 12,8" fill="none" stroke="#606060" stroke-width="2.2"/></svg>
<svg class="r" style="left:1099px;top:772px;" width="13" height="9" viewBox="0 0 13 9"><polyline points="1,1 6.5,7 12,1" fill="none" stroke="#606060" stroke-width="2.2"/></svg>
<div class="r" style="left:1px;top:790px;width:1092px;height:24px;background:#f0f0f0;"></div>
<div class="r" style="left:29px;top:790px;width:674px;height:24px;background:#cdcdcd;"></div>
<svg class="r" style="left:11px;top:796px;" width="9" height="13" viewBox="0 0 9 13"><polyline points="8,1 2,6.5 8,12" fill="none" stroke="#606060" stroke-width="2.2"/></svg>
<svg class="r" style="left:1074px;top:796px;" width="9" height="13" viewBox="0 0 9 13"><polyline points="1,1 7,6.5 1,12" fill="none" stroke="#606060" stroke-width="2.2"/></svg>
<div class="r" style="left:1px;top:815px;width:1117px;height:2px;background:#a0a0a0;"></div>
<svg class="r" style="left:13px;top:838px;" width="30" height="30" viewBox="0 0 30 30"><circle cx="14.5" cy="14.5" r="14" fill="none" stroke="#8a8a8a" stroke-width="1"/><polyline points="8,17 14.5,10 21,17" fill="none" stroke="#8a8a8a" stroke-width="1.2"/></svg>
<div class="t" style="left:53.50px;top:843px;font-size:18.6px;line-height:21px;color:#232323;transform-origin:0 0;transform:scaleX(0.9507);"><u>M</u>niej szczegółów</div>
<div class="r" style="left:965px;top:835px;width:140px;height:33px;background:#cccccc;border:1px solid #c2c2c2;box-sizing:border-box"></div>
<div class="t" style="left:970.40px;top:842px;font-size:18.9px;line-height:21px;color:#838383;transform-origin:0 0;transform:scaleX(0.9063);">Za<u>k</u>ończ zadanie</div>
<div class="r" style="left:0px;top:44px;width:1px;height:846px;background:#3f4834;"></div>
<div class="r" style="left:1118px;top:44px;width:1px;height:846px;background:#3f4834;"></div>
<div class="r" style="left:0px;top:889px;width:1119px;height:1px;background:#3f4834;"></div>
<div class="r" style="left:0px;top:0px;width:1px;height:44px;background:#4f6d2e;"></div>
<div class="r" style="left:1118px;top:0px;width:1px;height:44px;background:#4f6d2e;"></div>
</body></html>
